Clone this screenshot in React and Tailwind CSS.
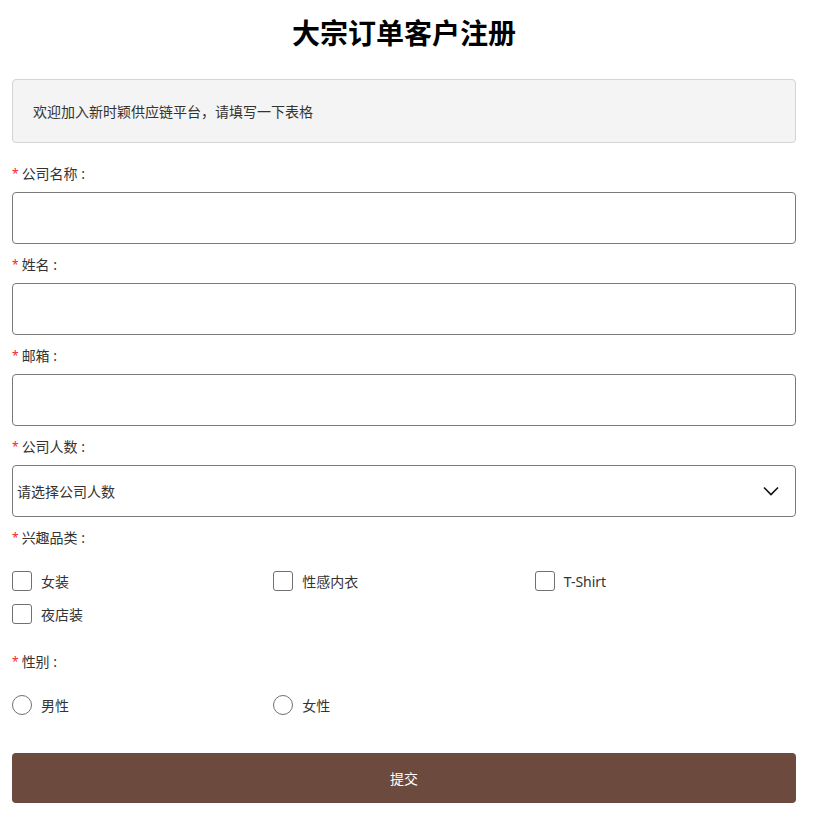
import React from "react";

const font = { fontFamily: '"Noto Sans", "Noto Sans CJK SC", sans-serif' };

function Label({ children }) {
  return (
    <div className="flex h-[18px] items-center text-[14px] leading-[18px] text-[#333]">
      <span className="mr-[3px] text-[12px] text-[#f5222d]">*</span>
      <span>{children} :</span>
    </div>
  );
}

function Input() {
  return (
    <input
      type="text"
      className="mt-[9px] block h-[52px] w-full rounded-[4px] border border-[#7a7a7a] bg-white px-[8px] outline-none"
    />
  );
}

function Checkbox({ label }) {
  return (
    <label className="flex h-[20px] items-center text-[14px] text-[#333]">
      <span className="mr-[9px] box-border h-[20px] w-[20px] rounded-[3px] border border-[#707070] bg-white" />
      <span>{label}</span>
    </label>
  );
}

function Radio({ label }) {
  return (
    <label className="flex h-[20px] items-center text-[14px] text-[#333]">
      <span className="mr-[9px] box-border h-[20px] w-[20px] rounded-full border border-[#707070] bg-white" />
      <span>{label}</span>
    </label>
  );
}

export default function App() {
  return (
    <div className="min-h-[830px] bg-white pl-[12px] pr-[20px]" style={font}>
      <h1 className="flex h-[66px] items-center justify-center text-[28px] font-bold text-black">
        大宗订单客户注册
      </h1>
      <div className="mt-[13px] flex h-[64px] items-center rounded-[4px] border border-[#d4d4d4] bg-[#f4f4f4] px-[20px] text-[14px] text-[#333]">
        欢迎加入新时颖供应链平台，请填写一下表格
      </div>

      <div className="mt-[22px]">
        <Label>公司名称</Label>
        <Input />
      </div>
      <div className="mt-[12px]">
        <Label>姓名</Label>
        <Input />
      </div>
      <div className="mt-[12px]">
        <Label>邮箱</Label>
        <Input />
      </div>
      <div className="mt-[12px]">
        <Label>公司人数</Label>
        <div className="mt-[9px] flex h-[52px] w-full items-center justify-between rounded-[4px] border border-[#7a7a7a] bg-white pl-[4px] pr-[16px] text-[14px] text-[#333]">
          <span>请选择公司人数</span>
          <svg width="16" height="10" viewBox="0 0 16 10" fill="none">
            <path d="M1 1.5 L8 8.5 L15 1.5" stroke="#111" strokeWidth="1.6" />
          </svg>
        </div>
      </div>
      <div className="mt-[12px]">
        <Label>兴趣品类</Label>
        <div className="mt-[24px] grid grid-cols-3 gap-y-[13px]">
          <Checkbox label="女装" />
          <Checkbox label="性感内衣" />
          <Checkbox label="T-Shirt" />
          <Checkbox label="夜店装" />
        </div>
      </div>
      <div className="mt-[29px]">
        <Label>性别</Label>
        <div className="mt-[24px] grid grid-cols-3">
          <Radio label="男性" />
          <Radio label="女性" />
        </div>
      </div>
      <button className="mt-[38px] flex h-[50px] w-full items-center justify-center rounded-[4px] bg-[#6d4a3e] text-[14px] text-white">
        提交
      </button>
    </div>
  );
}
